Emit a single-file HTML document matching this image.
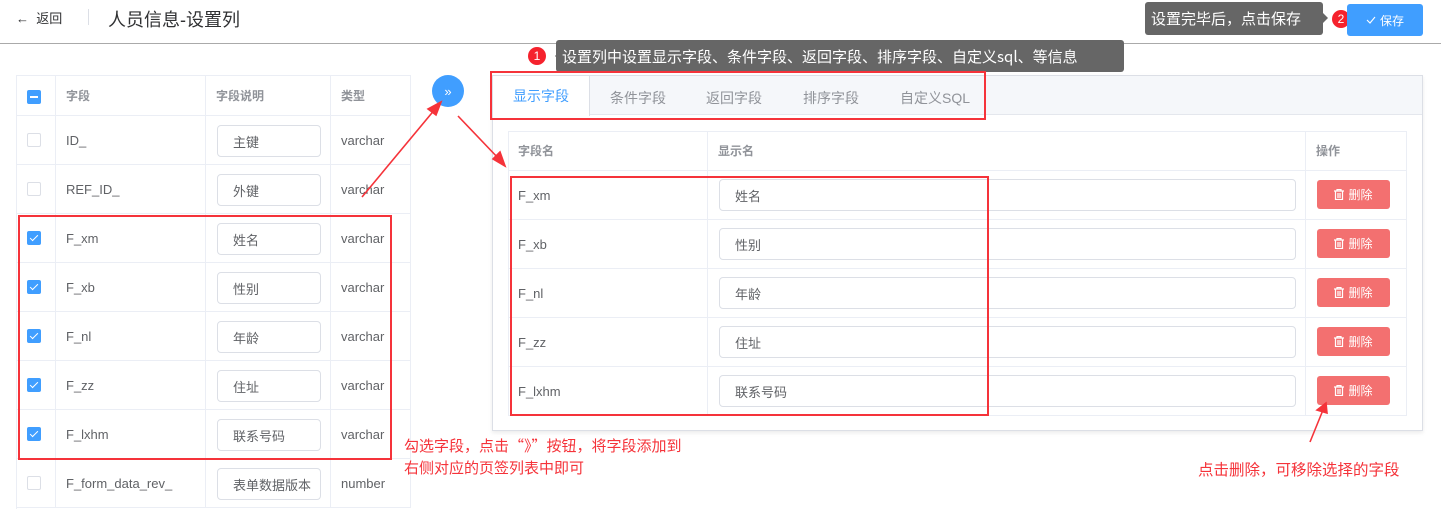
<!DOCTYPE html>
<html><head><meta charset="utf-8"><style>
*{box-sizing:border-box;margin:0;padding:0}
body{width:1441px;height:532px;background:#fff;position:relative;overflow:hidden;font-family:"Liberation Sans","Noto Sans CJK SC",sans-serif;font-size:13px;color:#606266}
.a{position:absolute}
.cell{position:absolute;border-right:1px solid #ebeef5;border-bottom:1px solid #ebeef5;display:flex;align-items:center;padding-left:10px}
.hd{color:#909399;font-weight:bold;font-size:12px}
.cb{position:absolute;width:14px;height:14px;border:1px solid #dcdfe6;border-radius:2px;background:#fff}
.cb.on{background:#409eff;border-color:#409eff}
.cb.on::after{content:"";position:absolute;left:4px;top:1px;width:3px;height:7px;border:solid #fff;border-width:0 1px 1px 0;transform:rotate(45deg)}
.inp{position:absolute;border:1px solid #dcdfe6;border-radius:4px;background:#fff;display:flex;align-items:center;padding-left:15px;color:#606266;font-size:13px;overflow:hidden;white-space:nowrap}
.del{position:absolute;left:1317px;width:73px;height:29px;background:#f37070;border-radius:3px;color:#fff;font-size:12px;display:flex;align-items:center;justify-content:center;gap:4px}
.rb{position:absolute;border:2px solid #f5333a}
.tip{position:absolute;background:#666;color:#fff;font-size:15px;border-radius:3px;display:flex;align-items:center;padding-left:6px;font-family:"Noto Sans CJK SC",sans-serif}
.badge{position:absolute;width:18px;height:18px;border-radius:50%;background:#f5222d;color:#fff;font-size:12px;display:flex;align-items:center;justify-content:center}
.red{position:absolute;color:#f5333a;font-size:15px;font-family:"Noto Sans CJK SC",sans-serif;line-height:20px}
</style></head><body>
<div class="a" style="left:16px;top:8px;font-size:13px;color:#303133">&#8592;&nbsp; 返回</div>
<div class="a" style="left:88px;top:9px;width:1px;height:16px;background:#dcdfe6"></div>
<div class="a" style="left:108px;top:6px;font-size:18px;color:#303133">人员信息-设置列</div>
<div class="a" style="left:0;top:43px;width:1441px;height:1px;background:#aaa"></div>

<div class="tip" style="left:1145px;top:2px;width:178px;height:33px">设置完毕后，点击保存</div>
<div class="a" style="left:1323px;top:13px;border:5px solid transparent;border-left-color:#666"></div>
<div class="badge" style="left:1332px;top:10px">2</div>
<div class="a" style="left:1347px;top:4px;width:76px;height:32px;background:#409eff;border-radius:3px;color:#fff;font-size:12px;display:flex;align-items:center;justify-content:center;gap:4px"><svg width="10" height="8" viewBox="0 0 10 8"><path d="M1 4l3 3 5-6" stroke="#fff" stroke-width="1.1" fill="none"/></svg>保存</div>

<div class="badge" style="left:528px;top:47px">1</div>
<div class="a" style="left:550px;top:51px;border:5px solid transparent;border-right-color:#666"></div>
<div class="tip" style="left:556px;top:40px;width:568px;height:32px">设置列中设置显示字段、条件字段、返回字段、排序字段、自定义sql、等信息</div>

<div class="a" style="left:16px;top:75px;width:395px;height:434px;border-left:1px solid #ebeef5;border-top:1px solid #ebeef5"></div>
<div id="lt"></div>

<div class="a" style="left:432px;top:75px;width:32px;height:32px;border-radius:50%;background:#409eff;color:#fff;font-size:13px;display:flex;align-items:center;justify-content:center">»</div>

<div class="a" style="left:492px;top:75px;width:931px;height:356px;border:1px solid #dcdfe6;box-shadow:0 2px 4px rgba(0,0,0,.08);background:#fff"></div>
<div class="a" style="left:493px;top:76px;width:929px;height:39px;background:#f5f7fa;border-bottom:1px solid #e4e7ed"></div>
<div class="a" style="left:493px;top:76px;width:97px;height:40px;background:#fff;border-right:1px solid #dcdfe6;color:#409eff;font-size:14px;display:flex;align-items:center;justify-content:center">显示字段</div>
<div class="a" style="left:610px;top:88px;font-size:14px;color:#909399">条件字段</div>
<div class="a" style="left:706px;top:88px;font-size:14px;color:#909399">返回字段</div>
<div class="a" style="left:803px;top:88px;font-size:14px;color:#909399">排序字段</div>
<div class="a" style="left:900px;top:88px;font-size:14px;color:#909399">自定义SQL</div>
<div class="a" style="left:508px;top:131px;width:899px;height:285px;border-left:1px solid #ebeef5;border-top:1px solid #ebeef5"></div>
<div id="rt"></div>

<div class="rb" style="left:490px;top:71px;width:496px;height:49px"></div>
<div class="rb" style="left:510px;top:176px;width:479px;height:240px"></div>
<div class="rb" style="left:18px;top:215px;width:374px;height:245px"></div>

<svg class="a" style="left:0;top:0" width="1441" height="532">
<g stroke="#f5333a" stroke-width="1.6" fill="#f5333a">
<line x1="362" y1="197" x2="436" y2="108"/><polygon points="441,102 428,109 436,115"/>
<line x1="458" y1="116" x2="500" y2="160"/><polygon points="505,166 493,159 500,152"/>
<line x1="1310" y1="442" x2="1323" y2="410"/><polygon points="1326,403 1317,410 1327,413"/>
</g></svg>
<div class="red" style="left:404px;top:436px">勾选字段，点击“》”按钮，将字段添加到</div>
<div class="red" style="left:404px;top:458px">右侧对应的页签列表中即可</div>
<div class="red" style="left:1198px;top:459px;font-size:15.5px">点击删除，可移除选择的字段</div>

<script>
var lt='',rows=[['ID_','主键','varchar',0],['REF_ID_','外键','varchar',0],['F_xm','姓名','varchar',1],['F_xb','性别','varchar',1],['F_nl','年龄','varchar',1],['F_zz','住址','varchar',1],['F_lxhm','联系号码','varchar',1],['F_form_data_rev_','表单数据版本','number',0]];
var cx=[16,56,206,331,411];
function cells(y,h,cls,arr){var s='';for(var i=0;i<4;i++)s+='<div class="cell '+cls+'" style="left:'+cx[i]+'px;top:'+y+'px;width:'+(cx[i+1]-cx[i])+'px;height:'+h+'px">'+arr[i]+'</div>';return s;}
lt+=cells(75,41,'hd',['','字段','字段说明','类型']);
lt+='<div class="cb" style="left:27px;top:90px;background:#409eff;border-color:#409eff"><span style="position:absolute;left:2px;top:5px;width:8px;height:2px;background:#fff"></span></div>';
rows.forEach(function(r,i){var y=116+i*49;lt+=cells(y,49,'',['',r[0],'',r[2]]);
lt+='<div class="cb'+(r[3]?' on':'')+'" style="left:27px;top:'+(y+17)+'px"></div>';
lt+='<div class="inp" style="left:217px;top:'+(y+9)+'px;width:104px;height:32px">'+r[1]+'</div>';});
document.getElementById('lt').outerHTML=lt;
var rt='',rx=[508,708,1306,1407];
function rc(y,h,cls,arr){var s='';for(var i=0;i<3;i++)s+='<div class="cell '+cls+'" style="left:'+rx[i]+'px;top:'+y+'px;width:'+(rx[i+1]-rx[i])+'px;height:'+h+'px">'+arr[i]+'</div>';return s;}
rt+=rc(131,40,'hd',['字段名','显示名','操作']);
var rr=[['F_xm','姓名'],['F_xb','性别'],['F_nl','年龄'],['F_zz','住址'],['F_lxhm','联系号码']];
rr.forEach(function(r,i){var y=171+i*49;rt+=rc(y,49,'',[r[0],'','']);
rt+='<div class="inp" style="left:719px;top:'+(y+8)+'px;width:577px;height:32px">'+r[1]+'</div>';
rt+='<div class="del" style="top:'+(y+9)+'px"><svg width="10" height="11" viewBox="0 0 10 11"><path d="M0 2h10M3 2V0.5h4V2M1.5 2v8.5h7V2M4 4v5M6 4v5" stroke="#fff" stroke-width="1.2" fill="none"/></svg>删除</div>';});
document.getElementById('rt').outerHTML=rt;
</script>
</body></html>
